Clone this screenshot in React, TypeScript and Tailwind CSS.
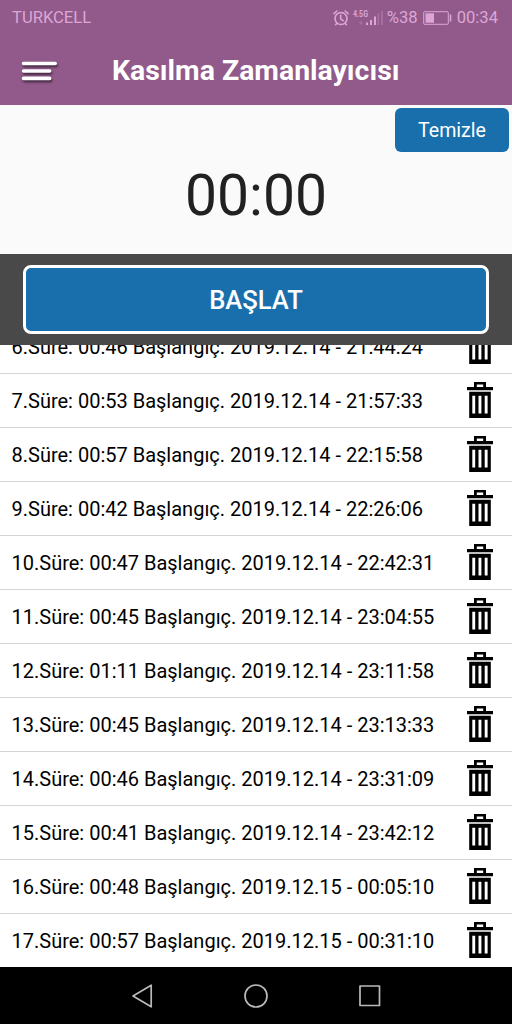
interface Contraction {
  no: number;
  duration: string;
  startedAt: string;
}

const CONTRACTIONS: Contraction[] = [
  { no: 6, duration: "00:46", startedAt: "2019.12.14 - 21:44:24" },
  { no: 7, duration: "00:53", startedAt: "2019.12.14 - 21:57:33" },
  { no: 8, duration: "00:57", startedAt: "2019.12.14 - 22:15:58" },
  { no: 9, duration: "00:42", startedAt: "2019.12.14 - 22:26:06" },
  { no: 10, duration: "00:47", startedAt: "2019.12.14 - 22:42:31" },
  { no: 11, duration: "00:45", startedAt: "2019.12.14 - 23:04:55" },
  { no: 12, duration: "01:11", startedAt: "2019.12.14 - 23:11:58" },
  { no: 13, duration: "00:45", startedAt: "2019.12.14 - 23:13:33" },
  { no: 14, duration: "00:46", startedAt: "2019.12.14 - 23:31:09" },
  { no: 15, duration: "00:41", startedAt: "2019.12.14 - 23:42:12" },
  { no: 16, duration: "00:48", startedAt: "2019.12.15 - 00:05:10" },
  { no: 17, duration: "00:57", startedAt: "2019.12.15 - 00:31:10" },
];

export default function App() {
  return (
    <div className="flex h-[1024px] w-[512px] flex-col overflow-hidden bg-white font-['Roboto','Noto_Sans',sans-serif]">
      <header className="h-[105px] shrink-0 bg-[#925a8b]">
        <StatusBar />
        <TitleBar />
      </header>
      <TimerPanel />
      <div className="h-[91px] shrink-0 bg-[#494949] px-[23px] pt-[11px]">
        <button
          type="button"
          className="flex h-[69px] w-full items-center justify-center rounded-lg border-3 border-white bg-[#196fac] pt-[2px] text-[25.6px] font-medium text-white"
        >
          BAŞLAT
        </button>
      </div>
      {/* The list is scrolled, so its first row is partly under the start bar. */}
      <main className="min-h-0 flex-1 overflow-hidden">
        <ul className="-mt-[25px]">
          {CONTRACTIONS.map((c) => (
            <Row key={c.no} item={c} />
          ))}
        </ul>
      </main>
      <NavigationBar />
    </div>
  );
}

function StatusBar() {
  return (
    <div className="flex h-9 items-center justify-between pr-[14px] pl-3 text-[16.6px] text-[#dba6d6]">
      <span>TURKCELL</span>
      <div className="flex items-center">
        <AlarmIcon />
        <SignalIcon />
        <span className="ml-[3px]">%38</span>
        <BatteryIcon />
        <span className="ml-[5px]">00:34</span>
      </div>
    </div>
  );
}

function AlarmIcon() {
  return (
    <svg width="16" height="16" viewBox="0 0 16 16" fill="none" stroke="currentColor" strokeWidth="1.6" strokeLinecap="round" strokeLinejoin="round">
      <circle cx="8" cy="8.5" r="6" />
      <path d="M7.7 5.2v3.8l2.5 1.6M1 3.6 3.8 1M15 3.6 12.2 1M3.8 13.4l-1.2 1.3M12.2 13.4l1.2 1.3" />
    </svg>
  );
}

function SignalIcon() {
  return (
    <svg className="ml-[4px]" width="31" height="18" viewBox="0 0 31 18" fill="currentColor">
      <text x="0" y="7.5" fontSize="8.5" fontWeight="700" textLength="15" lengthAdjust="spacingAndGlyphs">4.5G</text>
      <circle cx="8" cy="14" r="1.7" opacity="0.25" />
      <path d="M13 13.5h2V16h-2zM17 11h2v5h-2zM21 7.5h2V16h-2z" />
      <path d="M24.5 4.5h1.6V16h-1.6zM28 2h1.8v14H28z" opacity="0.3" />
    </svg>
  );
}

function BatteryIcon() {
  return (
    <svg className="ml-[5px]" width="29" height="14" viewBox="0 0 29 14" fill="none">
      <rect x="0.7" y="0.7" width="24.6" height="12.6" rx="1" stroke="currentColor" strokeWidth="1" />
      <rect x="2.5" y="2.3" width="8.5" height="9.4" fill="currentColor" />
      <path d="M26.7 3.5h1.6v7h-1.6z" fill="currentColor" />
    </svg>
  );
}

function TitleBar() {
  return (
    <div className="grid h-[69px] grid-cols-[112px_1fr] items-center">
      <button type="button" aria-label="Menü" className="pl-[20px]">
        <svg className="drop-shadow-[1px_2px_1px_rgba(0,0,0,0.55)]" width="40" height="24" viewBox="0 0 40 24" stroke="white" strokeWidth="3.6" strokeLinecap="round">
          <path d="M3.6 4.5h31.6M3.6 12h26M3.6 19.4h26" />
        </svg>
      </button>
      <h1 className="pt-px text-[28.4px] leading-none font-bold whitespace-nowrap text-white">Kasılma Zamanlayıcısı</h1>
    </div>
  );
}

function TimerPanel() {
  return (
    <section className="flex h-[149px] shrink-0 flex-col bg-[#fafafa] pt-[3px]">
      <button
        type="button"
        className="mr-[3px] flex h-[44px] w-[114px] items-center justify-center self-end rounded-md bg-[#196fac] pt-px text-[19.6px] text-white"
      >
        Temizle
      </button>
      <p className="mt-[10px] text-center text-[57px] leading-[68px] text-[#212121]">00:00</p>
    </section>
  );
}

function Row({ item }: { item: Contraction }) {
  return (
    <li className="flex h-[54px] items-center justify-between border-b border-[#d5d5d5] pr-[19px] pl-[11.5px] text-[20px] text-black">
      <span className="pt-px whitespace-nowrap">
        {item.no}.Süre: {item.duration} Başlangıç. {item.startedAt}
      </span>
      <TrashIcon />
    </li>
  );
}

function TrashIcon() {
  return (
    <svg className="-mt-px" width="26" height="36" viewBox="0 0 26 36" fill="black">
      <path fillRule="evenodd" d="M7 0h12v5h7v3.2H0V5h7zM9.8 2.6V5h6.4V2.6z" />
      <path fillRule="evenodd" d="M2.2 9.7h21.6V36H2.2zM5.3 13.8v17.6h2.9V13.8zM11.5 13.8v17.6h2.9V13.8zM17.7 13.8v17.6h2.9V13.8z" />
    </svg>
  );
}

function NavigationBar() {
  return (
    <nav className="h-[57px] shrink-0 bg-black px-[130px]">
      <div className="flex h-full items-center justify-between text-[#b9b9b9]">
        <svg width="24" height="26" viewBox="0 0 24 26" fill="none" stroke="currentColor" strokeWidth="1.7" strokeLinejoin="round">
          <path d="M21.2 2.2v21.6L3 13z" />
        </svg>
        <svg width="26" height="26" viewBox="0 0 26 26" fill="none" stroke="currentColor" strokeWidth="1.7">
          <circle cx="13" cy="13" r="11" />
        </svg>
        <svg width="24" height="26" viewBox="0 0 24 26" fill="none" stroke="currentColor" strokeWidth="1.7" strokeLinejoin="round">
          <rect x="2" y="3" width="19.5" height="19.5" />
        </svg>
      </div>
    </nav>
  );
}
